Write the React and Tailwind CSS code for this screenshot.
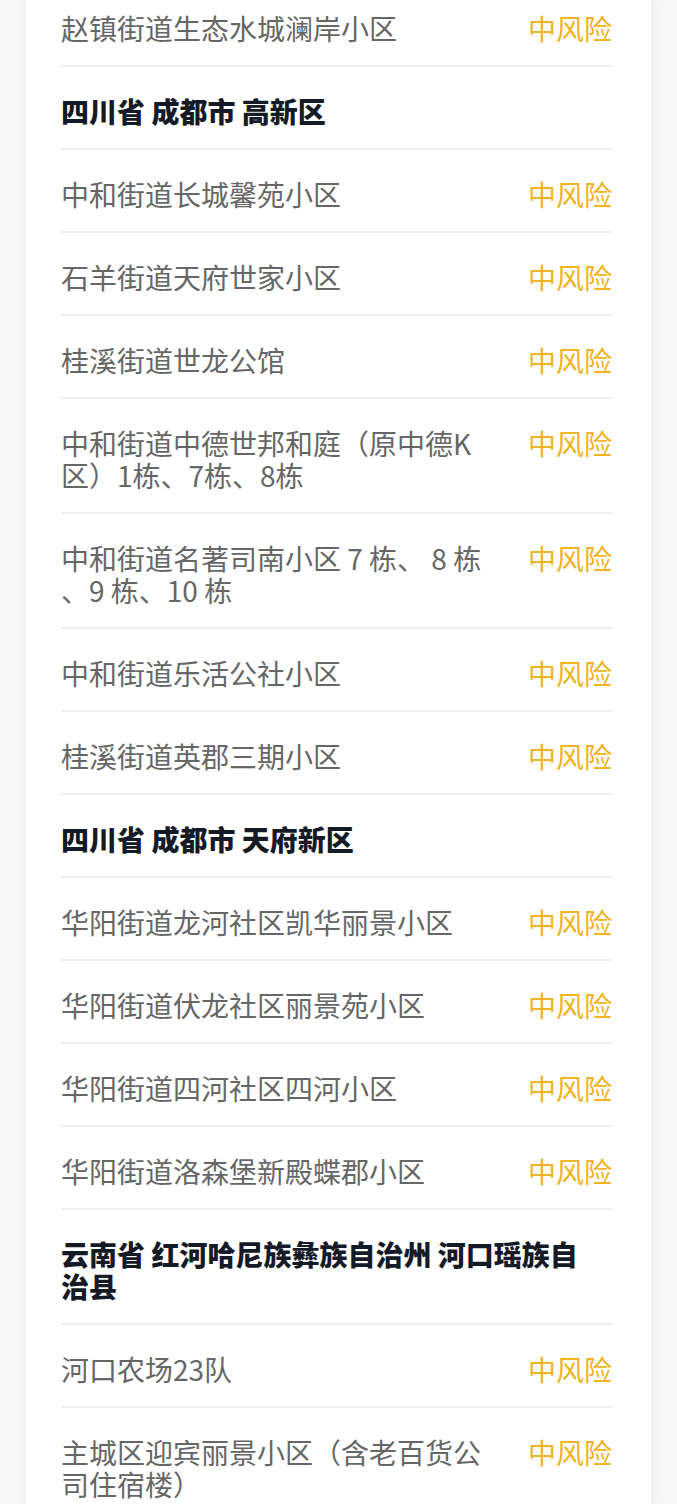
import React from "react";

// risk list, lines that wrap in the screenshot are split with \n
const items = [
  { name: "赵镇街道生态水城澜岸小区", risk: "中风险" },
  { header: "四川省 成都市 高新区" },
  { name: "中和街道长城馨苑小区", risk: "中风险" },
  { name: "石羊街道天府世家小区", risk: "中风险" },
  { name: "桂溪街道世龙公馆", risk: "中风险" },
  { name: "中和街道中德世邦和庭（原中德K\n区）1栋、7栋、8栋", risk: "中风险" },
  { name: "中和街道名著司南小区 7 栋、 8 栋\n、9 栋、10 栋", risk: "中风险" },
  { name: "中和街道乐活公社小区", risk: "中风险" },
  { name: "桂溪街道英郡三期小区", risk: "中风险" },
  { header: "四川省 成都市 天府新区" },
  { name: "华阳街道龙河社区凯华丽景小区", risk: "中风险" },
  { name: "华阳街道伏龙社区丽景苑小区", risk: "中风险" },
  { name: "华阳街道四河社区四河小区", risk: "中风险" },
  { name: "华阳街道洛森堡新殿蝶郡小区", risk: "中风险" },
  { header: "云南省 红河哈尼族彝族自治州 河口瑶族自\n治县" },
  { name: "河口农场23队", risk: "中风险" },
  { name: "主城区迎宾丽景小区（含老百货公\n司住宿楼）", risk: "中风险" },
];

const AreaRow = ({ name, risk }) => (
  <div className="flex items-start justify-between gap-6 pt-7 pb-[21px] border-b-2 border-[#f0f0f0]">
    <p className="flex-1 min-w-0 whitespace-pre-line text-[28px] leading-8 text-[#666666]">{name}</p>
    <span className="shrink-0 text-[28px] leading-8 text-[#f0b322]">{risk}</span>
  </div>
);

const RegionHeader = ({ title }) => (
  <div className="pt-7 pb-[21px] border-b-2 border-[#f0f0f0]">
    <h2 className="whitespace-pre-line text-[28px] leading-8 font-black text-[#151b26]">{title}</h2>
  </div>
);

export default function App() {
  return (
    <div
      className="h-[1504px] overflow-hidden bg-[#f6f6f6] px-[26px]"
      style={{ fontFamily: '"Noto Sans CJK SC", "Noto Sans", sans-serif' }}
    >
      <div className="flex h-full flex-col bg-white pl-[35px] pr-[39px] shadow-[0_0_10px_rgba(0,0,0,0.06)]">
        <div className="-mt-4">
          {items.map((item, i) =>
            item.header ? (
              <RegionHeader key={i} title={item.header} />
            ) : (
              <AreaRow key={i} name={item.name} risk={item.risk} />
            )
          )}
        </div>
      </div>
    </div>
  );
}
